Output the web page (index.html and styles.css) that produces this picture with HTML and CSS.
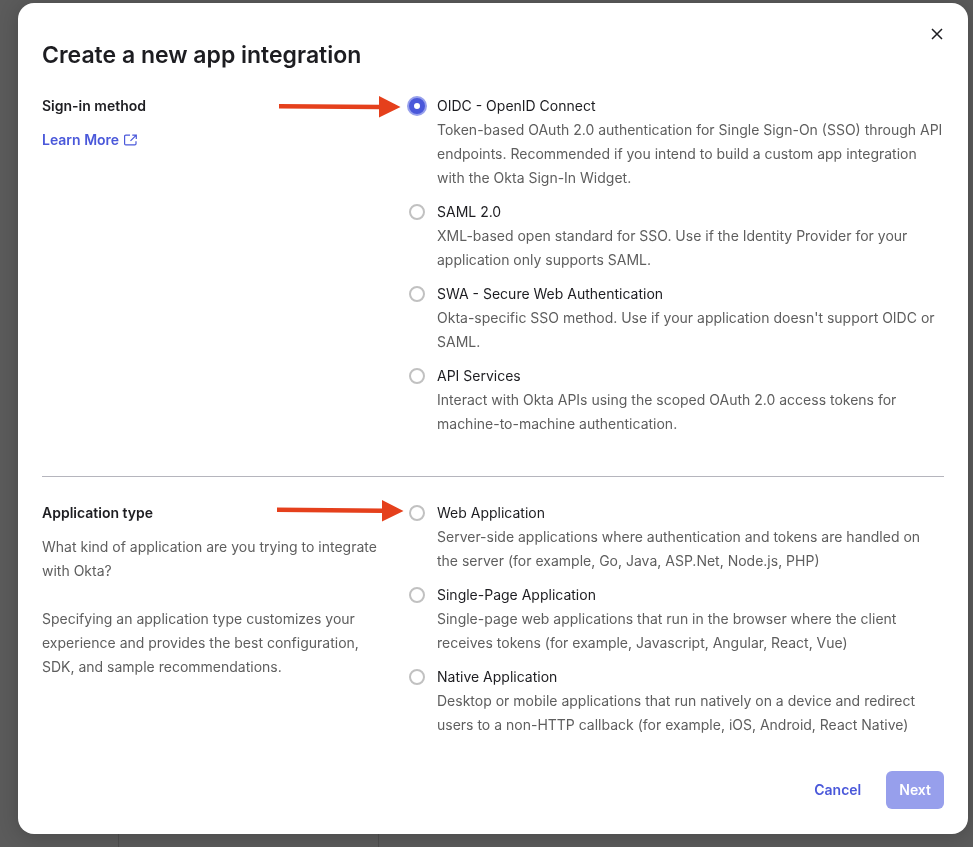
FILE: index.html
```html
<!DOCTYPE html>
<html lang="en">
<head>
<meta charset="utf-8">
<meta name="viewport" content="width=device-width, initial-scale=1">
<title>Create a new app integration</title>
<link rel="stylesheet" href="styles.css">
</head>
<body>
<div class="backdrop" aria-hidden="true"><span class="backdrop-cell"></span><span class="backdrop-cell"></span></div>
<main class="dialog" role="dialog" aria-labelledby="dialog-title">
  <button class="close" type="button" aria-label="Close">
    <svg width="12" height="12" viewBox="0 0 12 12" fill="none" stroke="currentColor" stroke-width="1.5"><path d="M1 1l10 10M11 1L1 11"/></svg>
  </button>
  <h1 class="title" id="dialog-title">Create a new app integration</h1>
  <form>
    <section class="section">
      <div class="aside">
        <h2 class="heading" id="method">Sign-in method</h2>
        <a class="link" href="#">Learn More
          <svg width="13" height="12" viewBox="0 0 13 12" fill="none" stroke="currentColor" stroke-width="1.2"><path d="M6 1.100H1.800Q.6 1.100.6 2.300v7.400q0 1.200 1.200 1.200h9q1.200 0 1.200-1.200V7.200M6.500 6.800L12 1.300M8.300 1.100H12.300V5"/></svg>
        </a>
      </div>
      <div class="options" role="radiogroup" aria-labelledby="method">
        <svg class="arrow arrow-method" width="122" height="22" viewBox="0 0 122 22" fill="#e5401c" aria-hidden="true"><path d="M0 8l100 .7V0l21.500 11L100 21.500V13.300L0 12.500z"/></svg>
        <div class="option">
          <input class="radio" type="radio" name="method" id="oidc" checked>
          <label class="label" for="oidc">OIDC - OpenID Connect</label>
          <p class="text">Token-based OAuth 2.0 authentication for Single Sign-On (SSO) through API endpoints. Recommended if you intend to build a custom app integration with the Okta Sign-In Widget.</p>
        </div>
        <div class="option">
          <input class="radio" type="radio" name="method" id="saml">
          <label class="label" for="saml">SAML 2.0</label>
          <p class="text">XML-based open standard for SSO. Use if the Identity Provider for your application only supports SAML.</p>
        </div>
        <div class="option">
          <input class="radio" type="radio" name="method" id="swa">
          <label class="label" for="swa">SWA - Secure Web Authentication</label>
          <p class="text">Okta-specific SSO method. Use if your application doesn't support OIDC or SAML.</p>
        </div>
        <div class="option">
          <input class="radio" type="radio" name="method" id="api">
          <label class="label" for="api">API Services</label>
          <p class="text">Interact with Okta APIs using the scoped OAuth 2.0 access tokens for machine-to-machine authentication.</p>
        </div>
      </div>
    </section>
    <section class="section section-divided">
      <div class="aside">
        <h2 class="heading" id="type">Application type</h2>
        <p class="text">What kind of application are you trying to integrate with Okta?</p>
        <p class="text text-spaced">Specifying an application type customizes your experience and provides the best configuration, SDK, and sample recommendations.</p>
      </div>
      <div class="options" role="radiogroup" aria-labelledby="type">
        <svg class="arrow arrow-type" width="127" height="22" viewBox="0 0 127 22" fill="#e5401c" aria-hidden="true"><path d="M0 7.500l105 .9V0l21.500 11L105 21.500V13L0 12z"/></svg>
        <div class="option">
          <input class="radio" type="radio" name="type" id="web">
          <label class="label" for="web">Web Application</label>
          <p class="text">Server-side applications where authentication and tokens are handled on the server (for example, Go, Java, ASP.Net, Node.js, PHP)</p>
        </div>
        <div class="option">
          <input class="radio" type="radio" name="type" id="spa">
          <label class="label" for="spa">Single-Page Application</label>
          <p class="text">Single-page web applications that run in the browser where the client receives tokens (for example, Javascript, Angular, React, Vue)</p>
        </div>
        <div class="option">
          <input class="radio" type="radio" name="type" id="native">
          <label class="label" for="native">Native Application</label>
          <p class="text">Desktop or mobile applications that run natively on a device and redirect users to a non-HTTP callback (for example, iOS, Android, React Native)</p>
        </div>
      </div>
    </section>
    <footer class="actions">
      <button class="button" type="button">Cancel</button>
      <button class="button button-primary" type="submit">Next</button>
    </footer>
  </form>
</main>
</body>
</html>
```
FILE: styles.css
```css
* { box-sizing: border-box; }

body {
  margin: 0;
  padding: 3px 5px 13px 18px;
  background: #5b5b5b;
  color: #1d1d21;
  font: 14px/24px Inter, "Liberation Sans", sans-serif;
}

h1, h2, p { margin: 0; }

.backdrop {
  position: fixed;
  inset: 50% 0 0;
  display: grid;
  grid-template-columns: 119px 260px 1fr;
}

.backdrop-cell { border-right: 1px solid #4e4e4e; }

.dialog {
  position: relative;
  padding: 32px 24px 25px;
  border-radius: 16px;
  background: #fff;
  box-shadow: 0 2px 20px rgba(0, 0, 0, 0.2);
}

.close {
  position: absolute;
  top: 19px;
  right: 19px;
  display: grid;
  place-items: center;
  width: 24px;
  height: 24px;
  padding: 0;
  border: 0;
  background: none;
  color: #1d1d21;
}

.title {
  margin-bottom: 19px;
  font-size: 23px;
  font-weight: 600;
  line-height: 40px;
}

.section {
  display: grid;
  grid-template-columns: minmax(0, 343fr) minmax(0, 535fr);
  gap: 24px;
}

.section-divided {
  margin-top: 40px;
  padding-top: 24px;
  border-top: 1px solid #b5b5bd;
}

.heading {
  margin-bottom: 10px;
  font-size: 14px;
  font-weight: 600;
  line-height: 24px;
}

.link {
  display: inline-flex;
  align-items: center;
  gap: 5px;
  color: #4a58da;
  font-weight: 600;
  text-decoration: none;
}

.text { color: #5e5e5e; }
.text-spaced { margin-top: 24px; }

.options {
  position: relative;
  display: grid;
  gap: 10px;
}

.option {
  display: grid;
  grid-template-columns: 16px minmax(0, 1fr);
  column-gap: 12px;
  align-items: center;
}

.option .text { grid-column: 2; }

.radio {
  appearance: none;
  width: 16px;
  height: 16px;
  margin: 0;
  border: 2px solid #c1c1c1;
  border-radius: 50%;
  background: #fff;
}

.radio:checked {
  border: 5px solid #4a58da;
  box-shadow: 0 0 0 2px #97a0ec;
}

.arrow { position: absolute; }
.arrow-method { top: 2px; left: -130px; }
.arrow-type { top: -1px; left: -132px; }

.actions {
  display: flex;
  justify-content: flex-end;
  gap: 12px;
  margin-top: 34px;
}

.button {
  height: 38px;
  padding: 0 13px;
  border: 0;
  border-radius: 6px;
  background: none;
  color: #4a58da;
  font: inherit;
  font-weight: 600;
}

.button-primary {
  background: #979fec;
  color: #fff;
}
```
